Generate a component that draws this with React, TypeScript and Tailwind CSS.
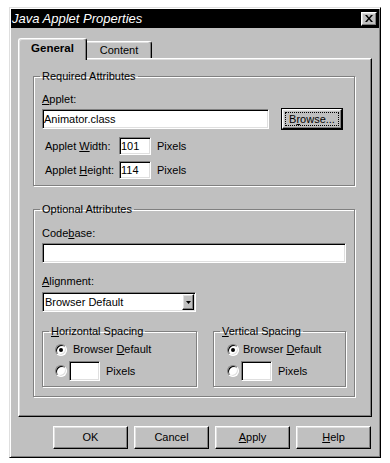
const font = "font-['Liberation_Sans',Arial,sans-serif]"

const raised =
	"border border-t-white border-l-white border-r-black border-b-black shadow-[inset_-1px_-1px_0_#808080,inset_1px_1px_0_#dfdfdf]"
const sunken =
	"border border-t-[#808080] border-l-[#808080] border-r-white border-b-white shadow-[inset_1px_1px_0_#000,inset_-1px_-1px_0_#dfdfdf]"
const group =
	"border border-[#808080] shadow-[inset_1px_1px_0_#fff,1px_1px_0_#fff]"

const Radio = ({ checked }: { checked?: boolean }) => (
	<div
		className={`w-[12px] h-[12px] rounded-full bg-white flex items-center justify-center shrink-0 ${sunken}`}
	>
		{checked && <div className="w-[4px] h-[4px] rounded-full bg-black" />}
	</div>
)

const SizeRow = ({
	label,
	mnemonic,
	rest,
	value,
	className
}: {
	label: string
	mnemonic: string
	rest: string
	value: string
	className: string
}) => (
	<div className={`flex items-center h-[18px] ${className}`}>
		<div className="w-[77px] pl-[3px]">
			{label}
			<u>{mnemonic}</u>
			{rest}
		</div>
		<div className={`w-[32px] h-[18px] bg-white flex items-center pl-[1px] ${sunken}`}>
			{value}
		</div>
		<div className="ml-[6px]">Pixels</div>
	</div>
)

const Spacing = ({
	title,
	width,
	pad,
	legend,
	gap
}: {
	title: string
	width: string
	pad: string
	legend: string
	gap: string
}) => (
	<fieldset className={`${group} ${width} ${pad} pb-[5px]`}>
		<legend className={`${legend} px-[2px] leading-[13px]`}>
			<u>{title[0]}</u>
			{title.slice(1)}
		</legend>
		<div className={`pt-[5px] flex items-center h-[18px] leading-[13px] ${gap}`}>
			<Radio checked />
			<span>
				Browser <u>D</u>efault
			</span>
		</div>
		<div className="mt-[5px] flex items-center h-[20px]">
			<Radio />
			<div className={`ml-[2px] w-[31px] h-[20px] bg-white ${sunken}`} />
			<span className="ml-[6px]">Pixels</span>
		</div>
	</fieldset>
)

const Button = ({ children }: { children: React.ReactNode }) => (
	<div className={`w-[75px] h-[23px] flex items-center justify-center ${raised}`}>
		{children}
	</div>
)

export default function App() {
	return (
		<div className={`w-[390px] h-[463px] bg-white pt-[7px] pl-[9px] ${font} text-[11px] text-black`}>
			<div className="w-[372px] bg-[#c0c0c0] border border-t-[#dfdfdf] border-l-[#dfdfdf] border-r-black border-b-black shadow-[inset_1px_1px_0_#fff,inset_-1px_-1px_0_#808080] p-[1px]">
				<div className="h-[19px] bg-black flex items-center justify-between pl-[1px] pr-[2px]">
					<span className="text-white italic text-[13px] leading-[19px]">
						Java Applet Properties
					</span>
					<div className={`w-[16px] h-[14px] bg-[#c0c0c0] flex items-center justify-center ${raised}`}>
						<svg width="8" height="7" viewBox="0 0 8 7">
							<path d="M0 0h2l2 2.5L6 0h2L5 3.5 8 7H6L4 4.5 2 7H0l3-3.5z" fill="#000" />
						</svg>
					</div>
				</div>

				<div className="px-[7px]">
					<div className="flex items-end mt-[10px]">
						<div className="relative z-10 -mb-[2px] w-[69px] h-[22px] bg-[#c0c0c0] border-t border-l border-r border-t-white border-l-white border-r-black rounded-t-[3px] shadow-[inset_-1px_0_0_#808080,inset_1px_1px_0_#dfdfdf] flex items-center justify-center font-bold text-[11.5px] pb-[2px]">
							General
						</div>
						<div className="w-[65px] h-[17px] border-t border-r border-t-white border-r-black rounded-tr-[3px] shadow-[inset_-1px_0_0_#808080,inset_0_1px_0_#dfdfdf] flex items-center justify-center">
							Content
						</div>
					</div>

					<div className={`pt-[11px] pl-[14px] pr-[16px] pb-[19px] ${raised}`}>
						<fieldset className={`${group} px-[8px] pb-[6px]`}>
							<legend className="-ml-[2px] px-[2px] leading-[13px]">Required Attributes</legend>
							<div className="pt-[10px] leading-[13px]">
								<u>A</u>pplet:
							</div>
							<div className="mt-[2px] flex items-center h-[22px]">
								<div className={`w-[227px] h-[20px] bg-white flex items-center pl-[1px] ${sunken}`}>
									Animator.class
								</div>
								<div className="ml-[12px] w-[62px] h-[22px] border border-black">
									<div className={`w-full h-full p-[2px] flex ${raised}`}>
										<div className="flex-1 border border-dotted border-black flex items-center justify-center">
											B<u>r</u>owse...
										</div>
									</div>
								</div>
							</div>
							<SizeRow label="Applet " mnemonic="W" rest="idth:" value="101" className="mt-[7px]" />
							<SizeRow label="Applet " mnemonic="H" rest="eight:" value="114" className="mt-[6px]" />
						</fieldset>

						<fieldset className={`${group} px-[8px] pb-[9px] mt-[17px]`}>
							<legend className="-ml-[2px] px-[2px] leading-[13px]">Optional Attributes</legend>
							<div className="pt-[11px] leading-[13px]">
								Code<u>b</u>ase:
							</div>
							<div className={`mt-[3px] h-[20px] bg-white ${sunken}`} />
							<div className="mt-[12px] leading-[13px]">
								<u>A</u>lignment:
							</div>
							<div className={`mt-[4px] w-[154px] h-[20px] bg-white flex items-center ${sunken}`}>
								<span className="flex-1 pl-[2px]">Browser Default</span>
								<div className={`w-[12px] h-[16px] mr-[1px] bg-[#c0c0c0] flex items-center justify-center ${raised}`}>
									<svg width="5" height="3" viewBox="0 0 5 3">
										<path d="M0 0h5L2.5 3z" fill="#000" />
									</svg>
								</div>
							</div>
							<div className="mt-[13px] flex gap-[16px]">
								<Spacing title="Horizontal Spacing" width="w-[155px]" pad="pl-[12px]" legend="-ml-[6px]" gap="gap-[6px]" />
								<Spacing title="Vertical Spacing" width="w-[133px]" pad="pl-[13px]" legend="-ml-[7px]" gap="gap-[4px]" />
							</div>
						</fieldset>
					</div>

					<div className="flex justify-end gap-[6px] mt-[9px] pb-[7px] pr-[1px]">
						<Button>OK</Button>
						<Button>Cancel</Button>
						<Button>
							<u>A</u>pply
						</Button>
						<Button>
							<u>H</u>elp
						</Button>
					</div>
				</div>
			</div>
		</div>
	)
}
